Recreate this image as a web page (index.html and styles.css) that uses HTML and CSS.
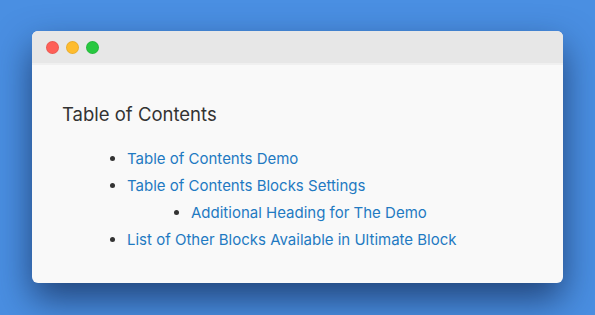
FILE: index.html
```html
<!DOCTYPE html>
<html lang="en">
<head>
  <meta charset="UTF-8">
  <title>Table of Contents</title>
  <link rel="stylesheet" href="styles.css">
</head>
<body>
  <div class="window">
    <div class="titlebar">
      <span class="dot red"></span>
      <span class="dot yellow"></span>
      <span class="dot green"></span>
    </div>
    <div class="content">
      <h2 class="toc-title">Table of Contents</h2>
      <ul class="toc-list">
        <li><a href="#">Table of Contents Demo</a></li>
        <li><a href="#">Table of Contents Blocks Settings</a>
          <ul class="toc-list nested">
            <li><a href="#">Additional Heading for The Demo</a></li>
          </ul>
        </li>
        <li><a href="#">List of Other Blocks Available in Ultimate Block</a></li>
      </ul>
    </div>
  </div>
</body>
</html>
```

FILE: styles.css
```css
body {
  margin: 0;
  height: 315px;
  box-sizing: border-box;
  padding: 31px 32px;
  background: #4a8fe2;
  font-family: Inter, "Noto Sans", sans-serif;
  overflow: hidden;
}
.window {
  height: 252px;
  background: #f9f9f9;
  border-radius: 6px;
  overflow: hidden;
  box-shadow: 0 16px 36px rgba(15, 35, 75, 0.7);
}
.titlebar {
  height: 32px;
  background: #e7e7e7;
  border-bottom: 2px solid #f0f0f0;
  display: flex;
  align-items: center;
  gap: 7px;
  padding-left: 14px;
}
.dot {
  box-sizing: border-box;
  width: 13px;
  height: 13px;
  border-radius: 50%;
  border: 1px solid rgba(0, 0, 0, 0.08);
}
.red { background: #fe5f57; }
.yellow { background: #febc2e; }
.green { background: #28c840; }
.content {
  padding: 37px 30px 0;
}
.toc-title {
  margin: 0 0 19px;
  font-size: 18.5px;
  font-weight: 400;
  color: #333;
  line-height: 24px;
}
.toc-list {
  margin: 0;
  padding-left: 65px;
  font-size: 15px;
  line-height: 27px;
  color: #333;
  list-style: disc;
}
.toc-list.nested {
  padding-left: 64px;
}
.toc-list a {
  color: #1f7ac2;
  text-decoration: none;
}
```
